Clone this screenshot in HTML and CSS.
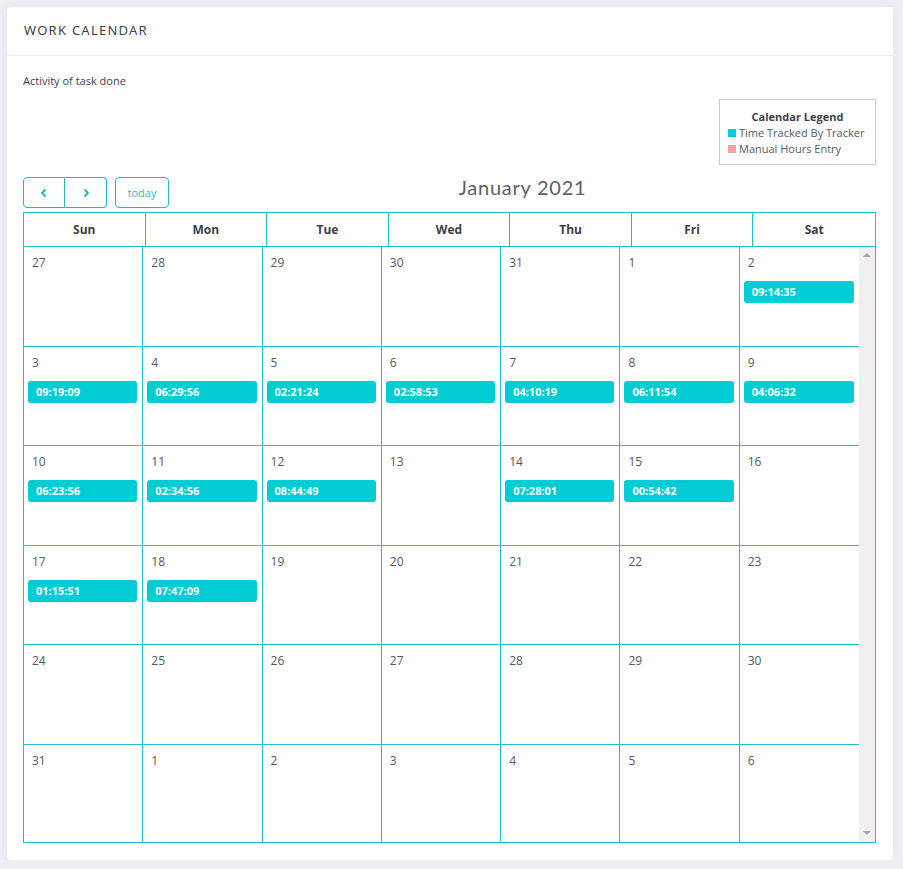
FILE: index.html
```html
<!DOCTYPE html>
<html>
<head>
<meta charset="utf-8">
<link rel="stylesheet" href="styles.css">
</head>
<body>
<div class="card">
  <div class="card-head">WORK CALENDAR</div>
  <div class="card-body">
    <div class="sub">Activity of task done</div>
    <div class="legend-row">
      <div class="legend">
        <div class="legend-title">Calendar Legend</div>
        <div class="legend-item"><span class="sw sw-track"></span>Time Tracked By Tracker</div>
        <div class="legend-item"><span class="sw sw-manual"></span>Manual Hours Entry</div>
      </div>
    </div>
    <div class="toolbar">
      <div class="tb-left">
        <div class="btn-group">
          <button class="btn btn-icon"><svg width="10" height="10" viewBox="0 0 10 10"><path d="M6.5 1.5 L3 5 L6.5 8.5" fill="none" stroke="#1fb5b9" stroke-width="1.8"/></svg></button>
          <button class="btn btn-icon"><svg width="10" height="10" viewBox="0 0 10 10"><path d="M3.5 1.5 L7 5 L3.5 8.5" fill="none" stroke="#1fb5b9" stroke-width="1.8"/></svg></button>
        </div>
        <button class="btn btn-today">today</button>
      </div>
      <h2 class="cal-title">January 2021</h2>
      <div class="tb-right"></div>
    </div>
    <div class="cal">
      <div class="cal-head">
        <div class="hd">Sun</div><div class="hd">Mon</div><div class="hd">Tue</div><div class="hd">Wed</div><div class="hd">Thu</div><div class="hd">Fri</div><div class="hd">Sat</div>
      </div>
      <div class="cal-body">
        <div class="cal-view">
          <div class="cal-grid">
            <div class="day"><span class="num">27</span></div>
            <div class="day"><span class="num">28</span></div>
            <div class="day"><span class="num">29</span></div>
            <div class="day"><span class="num">30</span></div>
            <div class="day"><span class="num">31</span></div>
            <div class="day"><span class="num">1</span></div>
            <div class="day"><span class="num">2</span><div class="ev">09:14:35</div></div>

            <div class="day"><span class="num">3</span><div class="ev">09:19:09</div></div>
            <div class="day"><span class="num">4</span><div class="ev">06:29:56</div></div>
            <div class="day"><span class="num">5</span><div class="ev">02:21:24</div></div>
            <div class="day"><span class="num">6</span><div class="ev">02:58:53</div></div>
            <div class="day"><span class="num">7</span><div class="ev">04:10:19</div></div>
            <div class="day"><span class="num">8</span><div class="ev">06:11:54</div></div>
            <div class="day"><span class="num">9</span><div class="ev">04:06:32</div></div>

            <div class="day"><span class="num">10</span><div class="ev">06:23:56</div></div>
            <div class="day"><span class="num">11</span><div class="ev">02:34:56</div></div>
            <div class="day"><span class="num">12</span><div class="ev">08:44:49</div></div>
            <div class="day"><span class="num">13</span></div>
            <div class="day"><span class="num">14</span><div class="ev">07:28:01</div></div>
            <div class="day"><span class="num">15</span><div class="ev">00:54:42</div></div>
            <div class="day"><span class="num">16</span></div>

            <div class="day"><span class="num">17</span><div class="ev">01:15:51</div></div>
            <div class="day"><span class="num">18</span><div class="ev">07:47:09</div></div>
            <div class="day"><span class="num">19</span></div>
            <div class="day"><span class="num">20</span></div>
            <div class="day"><span class="num">21</span></div>
            <div class="day"><span class="num">22</span></div>
            <div class="day"><span class="num">23</span></div>

            <div class="day"><span class="num">24</span></div>
            <div class="day"><span class="num">25</span></div>
            <div class="day"><span class="num">26</span></div>
            <div class="day"><span class="num">27</span></div>
            <div class="day"><span class="num">28</span></div>
            <div class="day"><span class="num">29</span></div>
            <div class="day"><span class="num">30</span></div>

            <div class="day"><span class="num">31</span></div>
            <div class="day"><span class="num">1</span></div>
            <div class="day"><span class="num">2</span></div>
            <div class="day"><span class="num">3</span></div>
            <div class="day"><span class="num">4</span></div>
            <div class="day"><span class="num">5</span></div>
            <div class="day"><span class="num">6</span></div>
          </div>
        </div>
        <div class="vscroll">
          <span class="arrow arrow-up"></span>
          <span class="arrow arrow-down"></span>
        </div>
      </div>
    </div>
  </div>
</div>
</body>
</html>
```

FILE: styles.css
```css
* { box-sizing: border-box; }
html, body { margin: 0; padding: 0; }
body {
  background: #eeeff4;
  font-family: "Open Sans", "Liberation Sans", sans-serif;
  color: #575962;
  padding: 7px 10px 0 7px;
}
.card {
  background: #fff;
  width: 886px;
  height: 853px;
  border-radius: 4px;
  box-shadow: 0 1px 10px rgba(69, 65, 78, 0.06);
}
.card-head {
  height: 49px;
  display: flex;
  align-items: center;
  padding: 0 17px 2px 17px;
  border-bottom: 1px solid #ebedf2;
  font-family: "Noto Sans", "Open Sans", sans-serif;
  font-size: 13px;
  letter-spacing: 1.25px;
  color: #3f4047;
}
.card-body {
  padding: 18px 17px 0 16px;
}
.sub {
  font-size: 11px;
  line-height: 14px;
  color: #3f4047;
}
.legend-row {
  display: flex;
  justify-content: flex-end;
  margin-top: 11px;
}
.legend {
  width: 157px;
  height: 66px;
  border: 1px solid #c9c9cf;
  padding: 9px 0 0 8px;
  font-size: 11px;
  line-height: 16px;
}
.legend-title {
  text-align: center;
  font-weight: 700;
  color: #3f4047;
  padding-right: 8px;
}
.legend-item {
  display: flex;
  align-items: center;
  color: #575962;
}
.sw {
  display: inline-block;
  width: 8px;
  height: 8px;
  margin-right: 3px;
}
.sw-track { background: #00ccd3; }
.sw-manual { background: #f29ea2; }

.toolbar {
  display: flex;
  justify-content: space-between;
  align-items: center;
  margin-top: 12px;
  height: 31px;
  margin-bottom: 4px;
}
.tb-left { display: flex; gap: 8px; }
.btn-group { display: flex; }
.btn {
  background: #fff;
  border: 1px solid #22b8bc;
  height: 31px;
  padding: 0;
  margin: 0;
  font-family: "Open Sans", sans-serif;
  color: #1fb5b9;
  display: flex;
  align-items: center;
  justify-content: center;
}
.btn-icon { width: 42px; }
.btn-group .btn-icon:first-child { border-radius: 4px 0 0 4px; }
.btn-group .btn-icon:last-child { border-radius: 0 4px 4px 0; border-left: none; width: 42px; }
.btn-today {
  width: 54px;
  border-radius: 4px;
  font-size: 11px;
  color: #3fb7bb;
}
.cal-title {
  margin: 0;
  font-family: "Lato", "Open Sans", sans-serif;
  font-weight: 400;
  font-size: 20px;
  color: #5d5f68;
  position: relative;
  top: -6px;
  letter-spacing: 0.75px;
}
.tb-right { width: 0; }

.cal {
  border: 1px solid #1ec3c7;
}
.cal-head {
  display: grid;
  grid-template-columns: repeat(7, 1fr);
  border-bottom: 1px solid #1ec3c7;
}
.hd {
  height: 33px;
  display: flex;
  align-items: center;
  justify-content: center;
  font-size: 12px;
  font-weight: 700;
  color: #3f4047;
  border-right: 1px solid #1ec3c7;
}
.hd:last-child { border-right: none; }
.cal-body {
  display: flex;
  height: 595px;
}
.cal-view {
  flex: 1;
  overflow: hidden;
}
.cal-grid {
  display: grid;
  grid-template-columns: repeat(7, 1fr);
  grid-auto-rows: 99.5px;
}
.day {
  border-right: 1px solid #1ec3c7;
  border-bottom: 1px solid #1ec3c7;
  padding: 7px 4px 0 4px;
}
.day:nth-child(7n) { border-right: none; }
.num {
  display: block;
  font-size: 12px;
  line-height: 18px;
  padding-left: 4px;
  color: #575962;
}
.ev {
  margin-top: 9px;
  height: 22px;
  background: #00ccd3;
  border-radius: 3px;
  color: #fff;
  font-size: 11px;
  font-weight: 700;
  line-height: 22px;
  padding-left: 8px;
  margin-right: 1px;
}
.vscroll {
  width: 16px;
  background: #f0f0f0;
  display: flex;
  flex-direction: column;
  justify-content: space-between;
  align-items: center;
  padding: 6px 0 7px 0;
}
.arrow {
  width: 0;
  height: 0;
  border-left: 4px solid transparent;
  border-right: 4px solid transparent;
}
.arrow-up { border-bottom: 4px solid #a3a3a3; }
.arrow-down { border-top: 4px solid #a3a3a3; }
```
